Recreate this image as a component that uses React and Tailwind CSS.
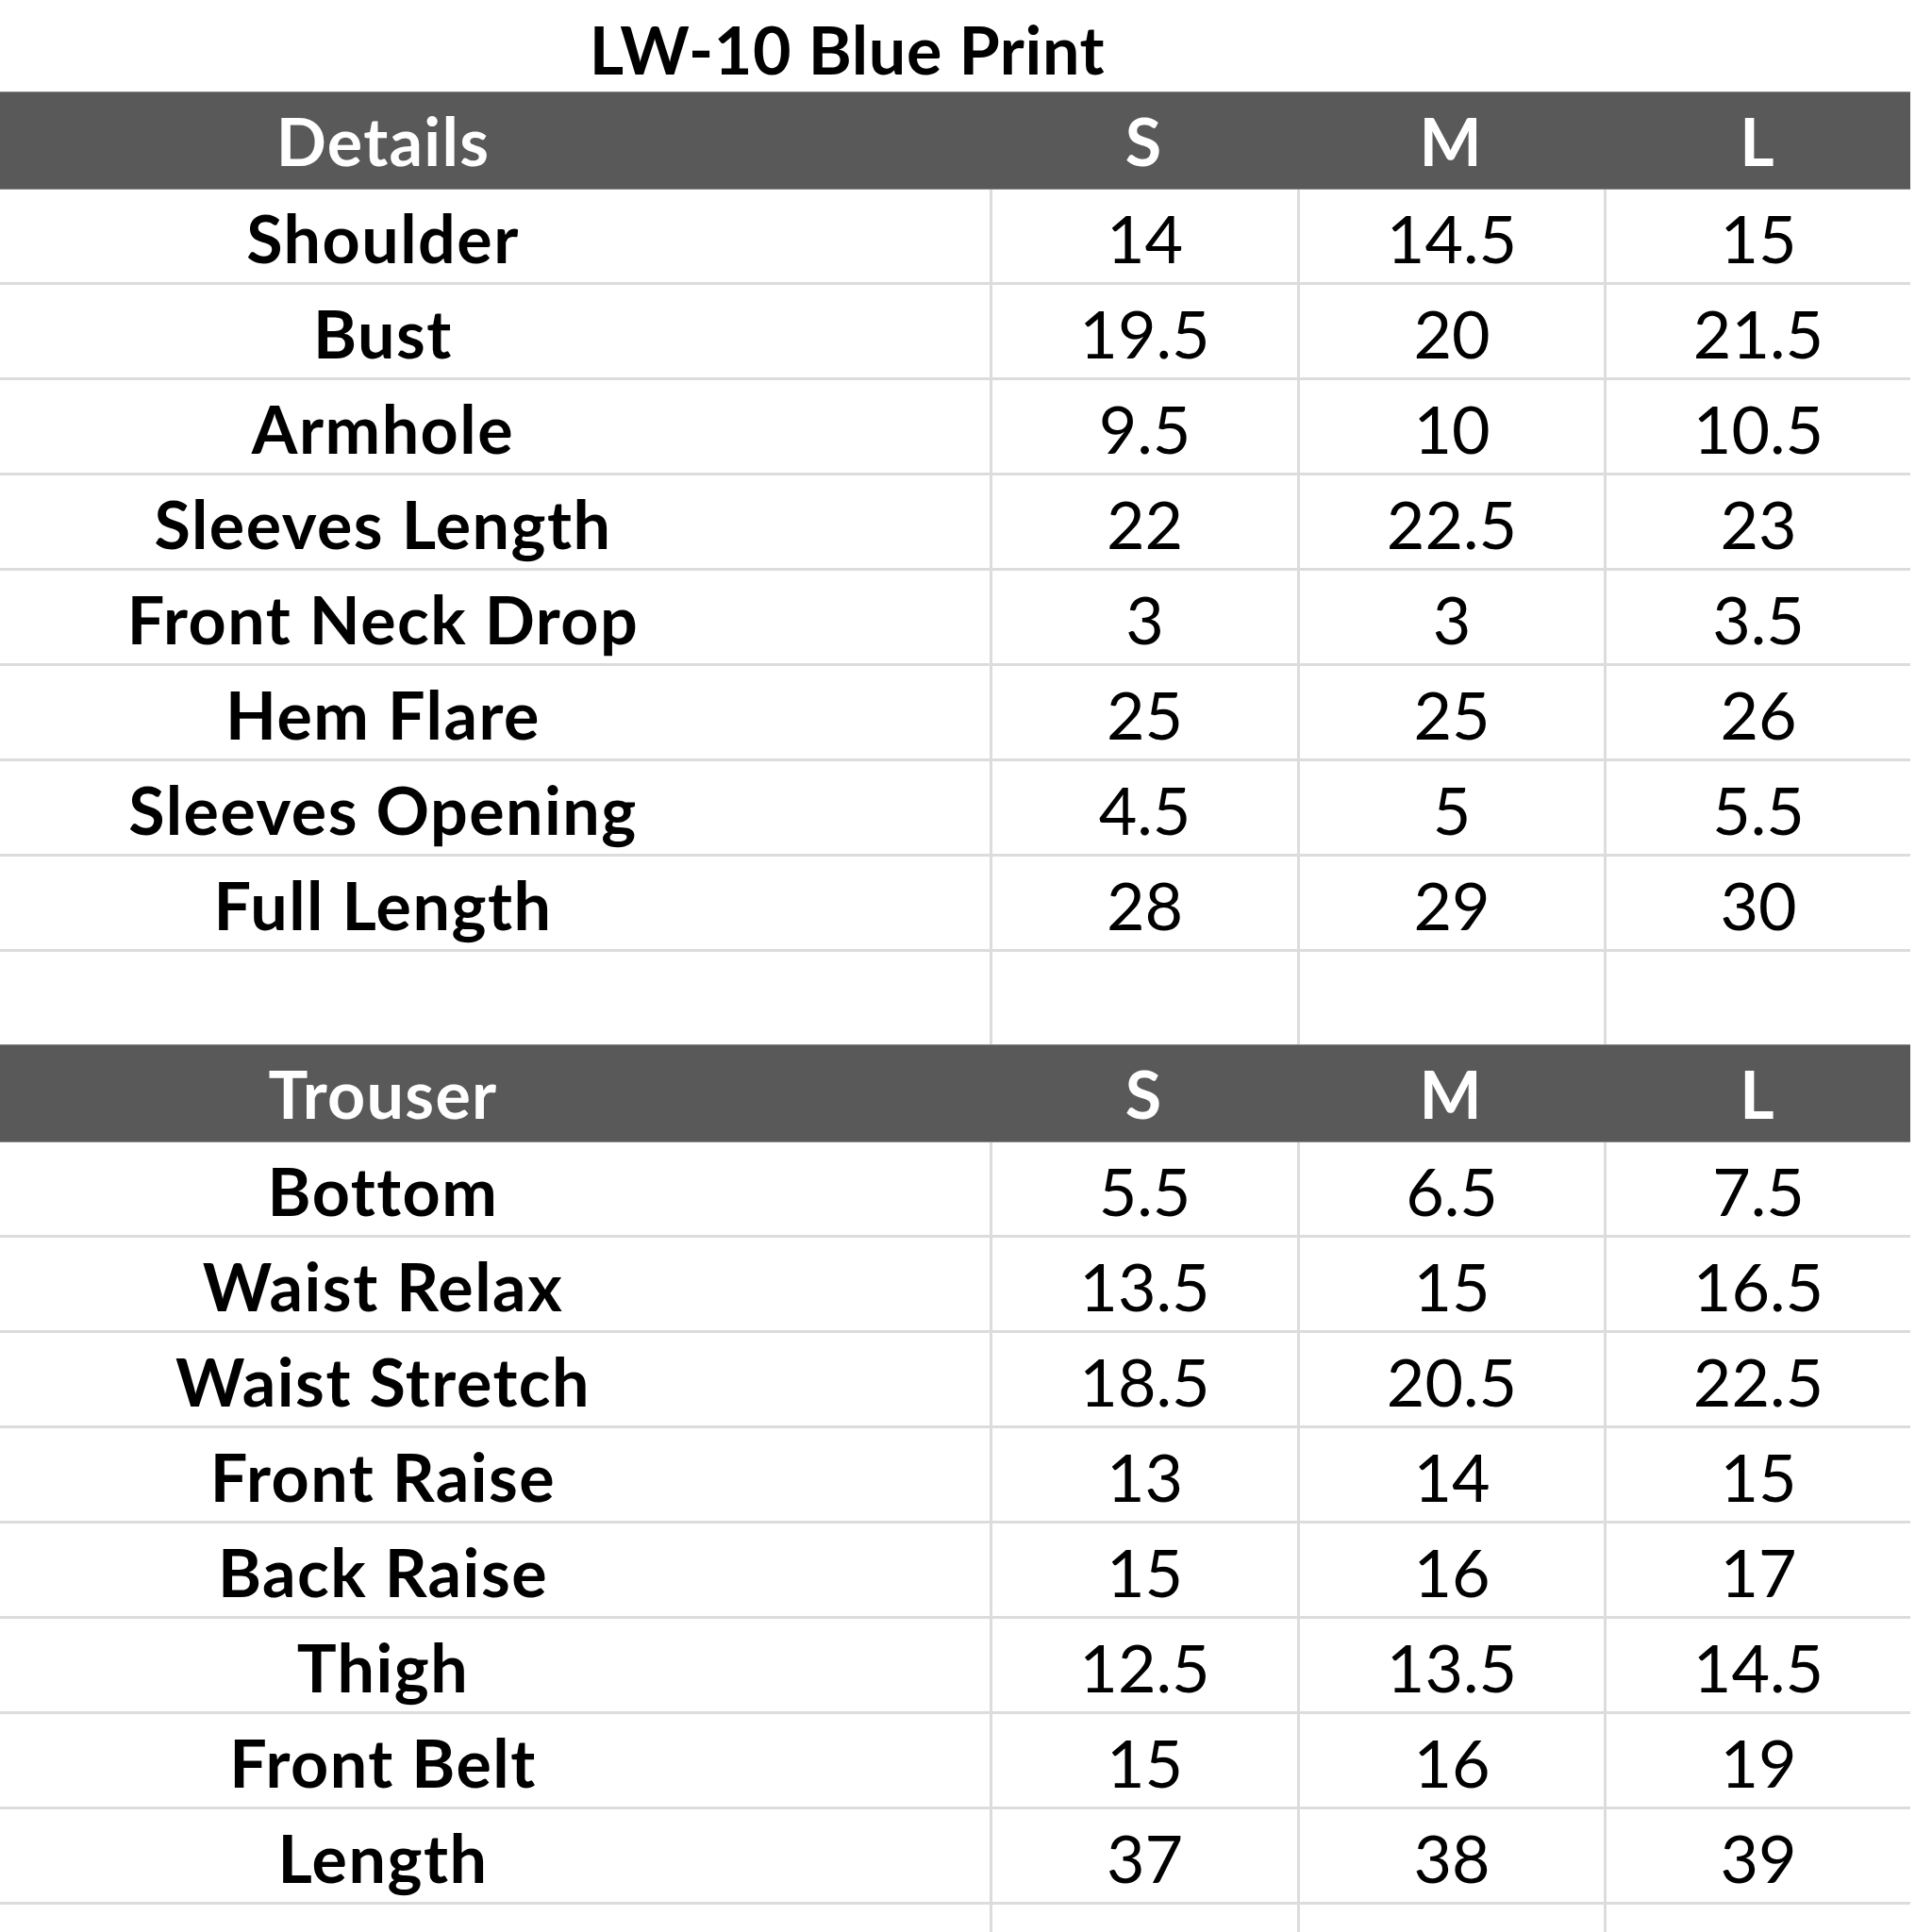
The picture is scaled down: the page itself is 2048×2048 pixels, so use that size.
const topRows = [
  ["Shoulder", "14", "14.5", "15"],
  ["Bust", "19.5", "20", "21.5"],
  ["Armhole", "9.5", "10", "10.5"],
  ["Sleeves Length", "22", "22.5", "23"],
  ["Front Neck Drop", "3", "3", "3.5"],
  ["Hem Flare", "25", "25", "26"],
  ["Sleeves Opening", "4.5", "5", "5.5"],
  ["Full Length", "28", "29", "30"],
];

const trouserRows = [
  ["Bottom", "5.5", "6.5", "7.5"],
  ["Waist Relax", "13.5", "15", "16.5"],
  ["Waist Stretch", "18.5", "20.5", "22.5"],
  ["Front Raise", "13", "14", "15"],
  ["Back Raise", "15", "16", "17"],
  ["Thigh", "12.5", "13.5", "14.5"],
  ["Front Belt", "15", "16", "19"],
  ["Length", "37", "38", "39"],
];

const HeaderRow = ({ label }) => (
  <div className="flex h-[104px] w-[2025px] items-center bg-[#595959] border-y border-[#8a8a8a] text-white font-bold">
    <div className="w-[1049px] pr-[237px] text-center tracking-[1.3px]">{label}</div>
    <div className="w-[326px] text-center">S</div>
    <div className="w-[325px] text-center">M</div>
    <div className="w-[325px] text-center">L</div>
  </div>
);

const DataRow = ({ row }) => (
  <div className="flex h-[101px] w-[2025px] border-b-[3px] border-[#dcdcdc]">
    <div className="flex w-[1049px] items-center justify-center pr-[237px] pt-[4px] font-bold tracking-[1.5px]">
      {row[0]}
    </div>
    {row.slice(1).map((v, i) => (
      <div
        key={i}
        className={`flex items-center justify-center border-l-[3px] border-[#dcdcdc] pt-[4px] ${
          i === 0 ? "w-[326px]" : "w-[325px]"
        }`}
      >
        {v}
      </div>
    ))}
  </div>
);

const EmptyRow = ({ h }) => (
  <div className={`flex w-[2025px] ${h}`}>
    <div className="w-[1049px]" />
    <div className="w-[326px] border-l-[3px] border-[#dcdcdc]" />
    <div className="w-[325px] border-l-[3px] border-[#dcdcdc]" />
    <div className="w-[325px] border-l-[3px] border-[#dcdcdc]" />
  </div>
);

export default function App() {
  return (
    <div
      className="w-[2048px] h-[2048px] overflow-hidden bg-white text-black text-[70px] leading-none"
      style={{ fontFamily: "Lato, 'Open Sans', sans-serif" }}
    >
      <div className="flex h-[97px] w-[1796px] items-center justify-center pt-[6px] font-bold tracking-[0.6px]">
        LW-10 Blue Print
      </div>
      <HeaderRow label="Details" />
      {topRows.map((r) => (
        <DataRow key={r[0]} row={r} />
      ))}
      <EmptyRow h="h-[98px]" />
      <HeaderRow label="Trouser" />
      {trouserRows.map((r) => (
        <DataRow key={r[0]} row={r} />
      ))}
      <EmptyRow h="h-[40px]" />
    </div>
  );
}
